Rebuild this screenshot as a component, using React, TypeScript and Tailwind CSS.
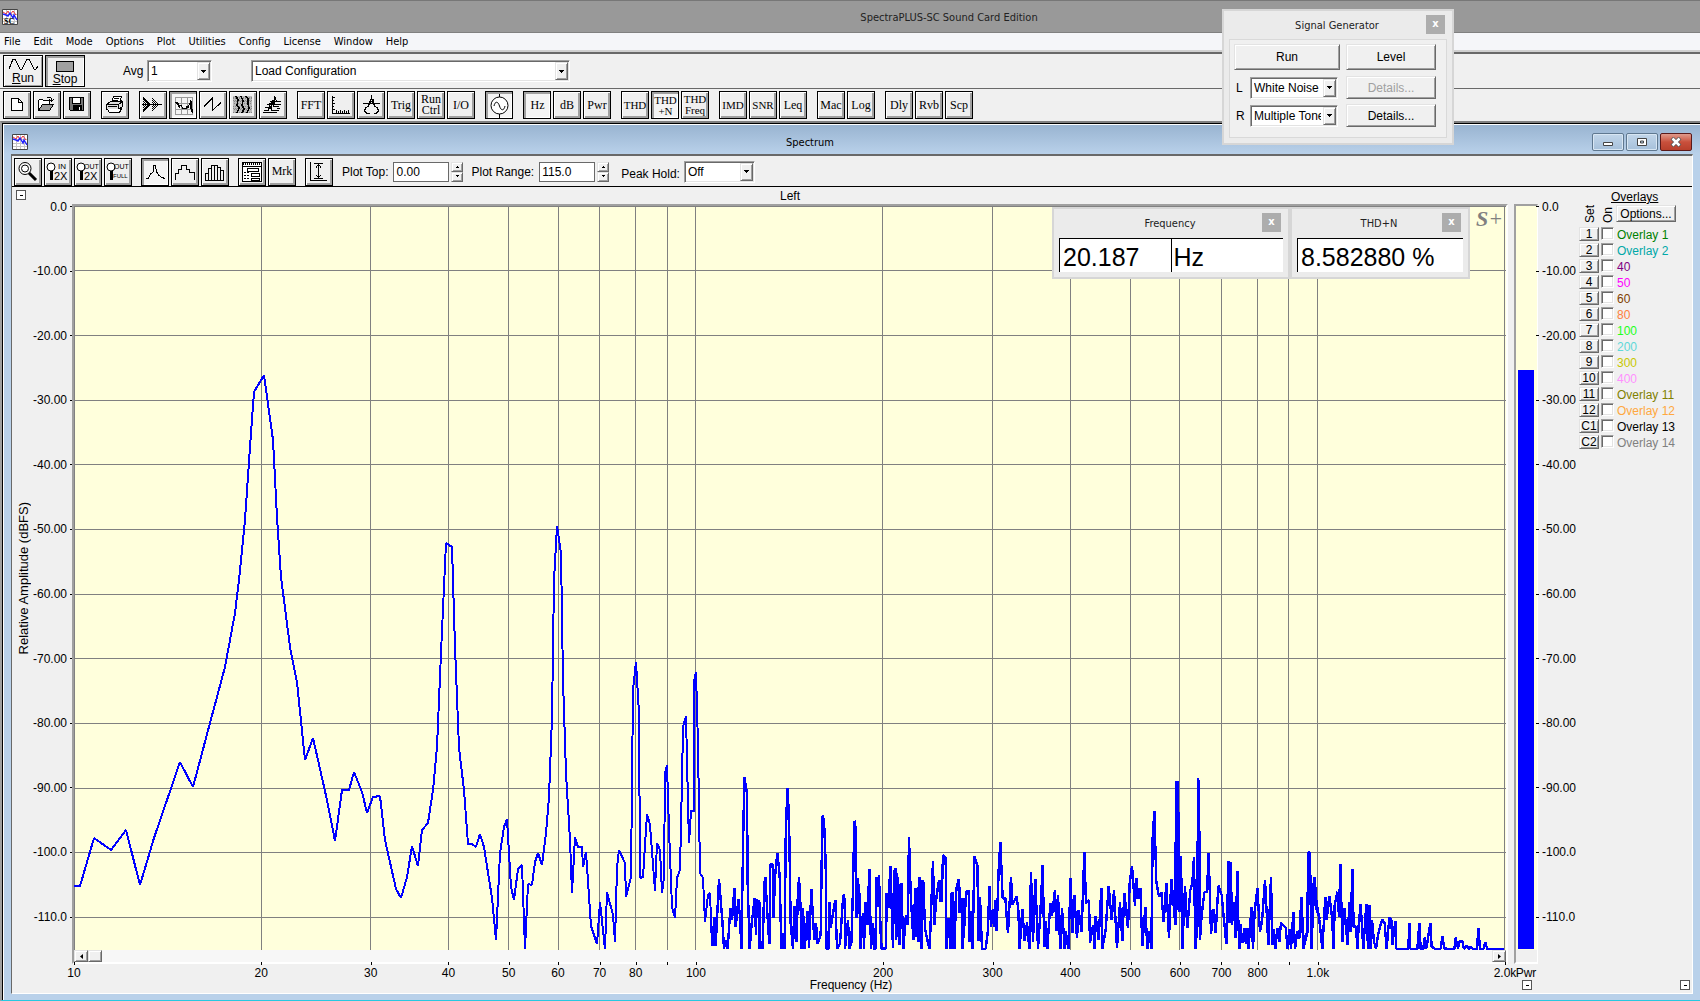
import React from "react";

const SANS = "font-['Liberation_Sans',sans-serif]";
const UI = "font-['DejaVu_Sans_Condensed','Liberation_Sans',sans-serif]";

const RAISED =
  "border border-[#e3e3e3] border-r-[#696969] border-b-[#696969] bg-[#f0f0f0] shadow-[inset_1px_1px_0_#fff,inset_-1px_-1px_0_#a0a0a0]";
const SUNKEN =
  "border border-[#a0a0a0] border-r-white border-b-white bg-white shadow-[inset_1px_1px_0_#696969,inset_-1px_-1px_0_#e3e3e3]";

/* ---------- small controls ---------- */

function Combo({
  label,
  value,
  width,
}: {
  label: string;
  value: string;
  width: string;
}) {
  return (
    <div className={`relative h-[22px] ${width} ${SUNKEN}`}>
      <select
        aria-label={label}
        className="h-full w-full appearance-none bg-transparent pt-px pr-4 pl-[3px] text-[12px] leading-[19px] text-black outline-none"
      >
        <option>{value}</option>
      </select>
      <span
        className={`pointer-events-none absolute top-px right-px bottom-px flex w-[13px] items-center justify-center ${RAISED}`}
      >
        <svg width="5" height="3" viewBox="0 0 5 3" shapeRendering="crispEdges">
          <path d="M0 0h5v1H0zM1 1h3v1H1zM2 2h1v1H2z" />
        </svg>
      </span>
    </div>
  );
}

function Spin({ id, label, value }: { id: string; label: string; value: string }) {
  return (
    <div className="flex items-center">
      <label htmlFor={id} className="mr-[5px] text-[12px]">
        {label}
      </label>
      <input
        id={id}
        defaultValue={value}
        className="h-5 w-14 border border-[#696969] bg-white px-0.5 text-[12px] outline-none"
      />
      <span className="ml-0.5 flex w-3 flex-col">
        {["M0 2h3v1H0zM1 1h1v1H1z", "M0 0h3v1H0zM1 1h1v1H1z"].map((d, i) => (
          <button
            key={d}
            aria-label={`${label} ${i ? "down" : "up"}`}
            className={`flex h-[10px] items-center justify-center ${RAISED}`}
          >
            <svg width="3" height="3" viewBox="0 0 3 3" shapeRendering="crispEdges">
              <path d={d} />
            </svg>
          </button>
        ))}
      </span>
    </div>
  );
}

function Collapse({ label }: { label: string }) {
  return (
    <button
      aria-label={label}
      className="flex h-[10px] w-[10px] shrink-0 items-center justify-center border border-[#555] bg-white"
    >
      <span className="h-px w-[3px] bg-black" />
    </button>
  );
}

function Tool({
  label,
  on,
  children,
}: {
  label: string;
  on?: boolean;
  children: React.ReactNode;
}) {
  return (
    <button
      aria-label={label}
      aria-pressed={!!on}
      className={`flex h-7 w-7 shrink-0 items-center justify-center overflow-hidden border border-black font-['Liberation_Serif',serif] text-[12px] leading-[11px] whitespace-nowrap text-black ${
        on
          ? "bg-[#f4f4f4] pt-px pl-px shadow-[inset_2px_2px_0_#a0a0a0,inset_-1px_-1px_0_#fff]"
          : "bg-[#efefef] shadow-[inset_1px_1px_0_#fff,inset_-2px_-2px_0_#a0a0a0]"
      }`}
    >
      {children}
    </button>
  );
}

function Ico({ children }: { children: React.ReactNode }) {
  return (
    <svg
      width="24"
      height="24"
      viewBox="0 0 24 24"
      fill="none"
      stroke="#000"
      className="shrink-0"
      shapeRendering="crispEdges"
    >
      {children}
    </svg>
  );
}

/* ---------- tool icons ---------- */

const icons: Record<string, React.ReactNode> = {
  New: (
    <Ico>
      <path fill="#fff" d="M6.500 5.500h7l4 4v8h-11zM13.500 5.500v4h4" />
    </Ico>
  ),
  Open: (
    <Ico>
      <path fill="#fff" d="M3.500 17.500v-10l1-1h3l1 1h6v3" />
      <path fill="#999" d="M3.500 17.500l4-6h11l-4 6z" />
      <path d="M12 4.500h4M16.500 5v3M14.500 6.500l2 2 2-2" />
    </Ico>
  ),
  Save: (
    <Ico>
      <path fill="#777" d="M4.500 4.500h14v13h-13l-1-1z" />
      <path fill="#fff" d="M7.500 4.500h8v6h-8z" />
      <path fill="#000" d="M8 12.500h8v5H8z" />
      <path stroke="#fff" d="M14.500 14v3" />
    </Ico>
  ),
  Print: (
    <Ico>
      <path fill="#fff" d="M8.500 9.500l2-6h8l-2 6z" />
      <path d="M11 5.500h5M10 7.500h5" />
      <path fill="#ddd" d="M3.500 11.500l4-3h11l-3 3zM3.500 11.500h12v5h-12zM15.500 11.500l4-3v5l-4 3" />
      <path fill="#fff" d="M4.500 16.500l2 3h10l2-4" />
      <path d="M5 13.500h9M17.500 7l2 2" />
    </Ico>
  ),
  "Time series": (
    <Ico>
      <path
        strokeDasharray="1 1"
        d="M2.500 4v16M3.500 5v14M4.500 6v12M5.500 7v10M6.500 8v8M7.500 9v6M8.500 10v4M11.500 5v14M12.500 6v12M13.500 7v10M14.500 8v8M15.500 9v6M16.500 10v4"
      />
      <path d="M1 11.500h20M2 4.500l6 6M2 18.500l6-6" />
    </Ico>
  ),
  Spectrum: (
    <Ico>
      <path stroke="#999" d="M3.500 3.500h17v17h-17zM9.500 3v17M15.500 3v17M3 9.500h17M3 15.500h17" />
      <path d="M3 8.500h2l2 4 2-1 2 3h3l1-2 1 1 3-7 1 9 1 3M4 9.500h2l2 4M18.500 6v6l1 6" />
    </Ico>
  ),
  Phase: (
    <Ico>
      <path d="M3 13.500L11.500 5v12.500L20 9.500" />
    </Ico>
  ),
  Spectrogram: (
    <Ico>
      <path fill="#bbb" stroke="none" d="M2 3h19v17H2z" />
      <path
        stroke="#888"
        strokeDasharray="1 1"
        d="M2 4.500h19M2 7.500h19M3 10.500h18M2 13.500h19M3 16.500h18M2 19.500h19M2 5.500h19M3 8.500h18M2 15.500h19"
      />
      <path strokeWidth="1.500" d="M5 3l2 4-1 5 2 3-2 5M10 3l2 5-1 4 2 4-2 4M15 3l2 3v5l1 4-2 5" />
    </Ico>
  ),
  Surface: (
    <Ico>
      <path d="M2 19.500h14M3 17.500h4l2-4 2 4h6M4 14.500h4l1-4 2-1 2 4h5M6 11.500h4l2-4 1 4h7M10 18v-8M13.500 3v8M9 8.500h11M13.500 3l2 5 4 1M16 15.500h3M15 17.500h3" />
    </Ico>
  ),
  Scaling: (
    <Ico>
      <path d="M3.500 3v17M3 20.500h18M3 4.500h3M3 7.500h2M3 10.500h3M3 13.500h2M3 16.500h3M7.500 17v3M9.500 18v2M11.500 17v3M13.500 18v2M15.500 17v3M17.500 18v2M19.500 17v3" />
    </Ico>
  ),
  Calibrate: (
    <Ico>
      <path d="M12.500 2v4M4 10.500h17M11 6h3v2h-3M11.500 7l-2 6-3 2-1 3 2 2h3M13.500 7l2 6 3 2 1 3-2 2h-3M12 8l-3 5M13 8l3 5" />
    </Ico>
  ),
  Generator: (
    <svg width="24" height="24" viewBox="0 0 24 24" fill="none" stroke="#000" className="shrink-0">
      <circle cx="11.500" cy="11.500" r="8.500" fill="#fff" />
      <path d="M11.500 0v3M11.500 20v4M6 12c1-5 4-5 5.500 0s4.500 5 5.500 0" />
    </svg>
  ),
  Zoom: (
    <svg width="24" height="24" viewBox="0 0 24 24" fill="none" stroke="#000" className="shrink-0">
      <circle cx="9" cy="8.500" r="6" fill="#fff" />
      <circle cx="9" cy="8.500" r="3.500" />
      <path d="M13 13l7 7" strokeWidth="3" />
    </svg>
  ),
  Peak: (
    <Ico>
      <path d="M2 18.500h2l3-5 2-1 1-7h1l2 7 2 3 3 2 3 1" />
    </Ico>
  ),
  Steps: (
    <Ico>
      <path d="M2.500 20v-7h3V9h3V5.500h5v4h3v3h4.500V20" />
    </Ico>
  ),
  Bars: (
    <Ico>
      <path d="M2.500 20v-7h3v7M5.500 20V8.500h3V20M8.500 20V5.500h3V20M11.500 20V5.500h3V20M14.500 20V7.500h3V20M17.500 20v-9.500h3V20M2 20.500h19" />
    </Ico>
  ),
  Dialog: (
    <Ico>
      <path fill="#fff" d="M2.500 2.500h19v19h-19z" />
      <path d="M3 4.500h18M3 3.500h18" strokeDasharray="1 1" />
      <path d="M3 6.500h18M7.500 8.500h11v3h-11zM11.500 13.500h8v3h-8zM11.500 18.500h8v2h-8z" />
      <path d="M4 12.500h5M4 15.500h5M4 18.500h5" strokeDasharray="2 1" />
    </Ico>
  ),
  Range: (
    <Ico>
      <path d="M3.500 2v18M3 20.500h17M7 3.500h9M7 18.500h9M11.500 4v14M9.500 7.500v-1l2-2 2 2v1M9.500 14.500v1l2 2 2-2v-1" />
    </Ico>
  ),
};

function ZoomStep({ a, b }: { a: string; b: string }) {
  return (
    <svg width="24" height="24" viewBox="0 0 24 24" className="shrink-0">
      <circle cx="5" cy="7" r="4" fill="#fff" stroke="#000" />
      <path d="M4 11h3v9H4z" />
      <text x={a === "IN" ? 12 : 8} y="9" fontSize={a === "IN" ? 8 : 7} fontFamily="Liberation Sans">
        {a}
      </text>
      <text
        x={b === "2X" ? 8 : 7}
        y={b === "2X" ? 20 : 18}
        fontSize={b === "2X" ? 11 : 6}
        fontFamily="Liberation Sans"
      >
        {b}
      </text>
    </svg>
  );
}

function AppIcon({ text }: { text?: string }) {
  return (
    <svg width="16" height="16" viewBox="0 0 16 16" className="shrink-0">
      <path fill="#fff" stroke="#444" d="M.5.5h15v15H.5z" />
      <path stroke="#c4c4c4" d="M4.500 1v14M8.500 1v14M12.500 1v14M1 5.500h14M1 9.500h14M1 12.500h14" />
      <path fill="none" stroke="#e33" d="M1 3l3 2 2-3 2 4 3-4 3 4" />
      <path fill="none" stroke="#22f" strokeWidth="1.400" d="M1 5l3 1 2 1 2-3 3 5 1-3 3 5" />
      {text && (
        <text x="2" y="14.500" fontSize="8" fontWeight="bold" fontFamily="Liberation Serif">
          {text}
        </text>
      )}
    </svg>
  );
}

/* ---------- toolbars ---------- */

type Item = { t: string; on?: boolean; small?: boolean };
const mainTools: Item[][] = [
  [{ t: "New" }, { t: "Open" }, { t: "Save" }],
  [{ t: "Print" }],
  [{ t: "Time series" }, { t: "Spectrum", on: true }, { t: "Phase" }, { t: "Spectrogram" }, { t: "Surface" }],
  [{ t: "FFT" }, { t: "Scaling" }, { t: "Calibrate" }, { t: "Trig" }, { t: "Run Ctrl" }, { t: "I/O" }],
  [{ t: "Generator", on: true }],
  [{ t: "Hz", on: true }, { t: "dB" }, { t: "Pwr" }],
  [{ t: "THD", small: true }, { t: "THD +N", on: true, small: true }, { t: "THD Freq", small: true }],
  [{ t: "IMD", small: true }, { t: "SNR", small: true }, { t: "Leq" }],
  [{ t: "Mac" }, { t: "Log" }],
  [{ t: "Dly" }, { t: "Rvb" }, { t: "Scp" }],
];

function ToolGroup({ items }: { items: Item[] }) {
  return (
    <div className="flex gap-0.5">
      {items.map(({ t, on, small }) => (
        <Tool key={t} label={t} on={on}>
          {icons[t] ?? (
            <span className={small ? "text-[11px]" : ""}>
              {t.split(" ").map((w) => (
                <span key={w} className="block">
                  {w}
                </span>
              ))}
            </span>
          )}
        </Tool>
      ))}
    </div>
  );
}

/* ---------- chart ---------- */

const MINOR = [10, 20, 30, 40, 50, 60, 70, 80, 90, 100, 200, 300, 400, 500, 600, 700, 800, 900, 1000, 2000];
const DB = ["0.0", "-10.00", "-20.00", "-30.00", "-40.00", "-50.00", "-60.00", "-70.00", "-80.00", "-90.00", "-100.0", "-110.0"];
const freqX = (f: number) => Math.floor(74.4 + 621.5 * Math.log10(f / 10)) + 0.5;
const dbY = (i: number) => Math.floor(206.3 + 64.65 * i) + 0.5;
const freqLabel = (f: number) =>
  f === 90 || f === 900 ? "" : f >= 1000 ? `${(f / 1000).toFixed(1)}k` : `${f}`;

const LOW =
  "74,886 80,886 94,838 111,850 126,830 140,885 154,838 167,800 180,762 193,787 210,723 225,667 235,613 239,580 245,520 250,447 254,392 264,375 273,440 277,517 281,577 290,647 297,682 305,760 313,738 327,800 335,841 342,790 349,790 354,772 362,792 367,813 373,797 380,796 385,840 396,889 401,898 407,877 412,846 418,866 422,830 428,823 433,790 437,747 441,653 446,543 452,547 455,647 459,748 464,790 468,844 472,844 476,847 480,834 484,847 492,898 496,940 500,853 504,827 507,819 511,887 514,900 518,869 522,865 525,949 528,884 532,885 535,862 538,853 542,865 546,833 549,797 552,717 554,580 557,526 561,553 563,680 566,773 568,807 570,840 572,893 575,837 578,847 582,847 583,867 586,852 591,926 597,944 600,902 605,949 607,892 613,915 615,942 617,868 619,850 625,863 626,897 631,877 632,783 633,690 636,662 639,713 640,878 643,877 647,814 650,825 655,891 657,843 660,850 662,893 664,877 665,773 667,765 669,830 672,907 675,918 677,878 680,870 682,780 683,727 686,716 688,803 689,843 691,811 694,811 694,682 696,672 698,745 700,873 703,878 705,922 708,895 710,893 712,946";

/* Upper bands are sampled at a third of a plot unit. */
const MID =
  "457,918 463,830 467,917 477,718 487,840 492,927 496,900 503,927 511,805 516,840 523,745 527,862 535,778 540,830 544,927 550,570 553,412 561,460 563,730 569,927 575,850 584,775 588,885 590,780 598,785 599,927 603,905 608,927 613,730 616,712 622,820 628,912 631,672 638,672 640,835 646,700 652,638 659,705 664,927 669,880 674,927 677,600 682,443 687,525 692,850 699,927 703,797 710,905 713,780 717,712 722,805 724,927 729,805 734,927 743,812 747,925 754,748 763,900 768,848 773,912 782,885 787,527 792,540 797,670 799,927 805,927 808,785 812,865 819,820 826,780 831,927 840,910 850,764 854,780 855,927 864,840 868,927 874,910 879,745 883,542 888,570 889,835 893,715 898,760 901,927 909,818 912,927 916,785 922,855 928,688 933,927 939,850 942,927 946,927 950,710 953,800 957,704 962,880 965,927 978,925 980,760 985,805 991,677 999,925 1002,700 1006,685 1008,900 1010,700 1012,890 1014,710 1019,915 1021,735 1024,730 1030,927 1038,825 1043,855 1047,592 1052,760 1060,900 1066,745 1070,890 1074,740 1076,905 1079,712 1084,927 1087,720 1090,725 1095,865 1105,913 1109,927 1113,820 1119,662 1123,855 1130,765 1137,720 1141,785 1150,645 1158,655 1159,927 1166,835 1171,885 1175,758 1179,927 1185,860 1188,752 1196,718 1199,818";

const HIGH =
  "0,365 5,425 9,285 17,295 19,567 27,475 32,567 38,397 44,567 48,395 57,358 61,457 67,415 67,567 74,487 78,395 86,392 88,545 94,452 98,567 103,288 112,316 116,543 120,410 126,567 137,567 144,510 148,377 153,500 159,448 162,500 166,420 170,512 176,330 181,245 188,415 196,415 204,520 213,350 217,435 230,410 235,450 239,567 247,447 254,543 261,487 268,567 273,335 279,545 286,357 294,567 301,460 308,315 313,562 318,483 322,567 331,430 336,467 345,390 349,512 354,405 361,567 366,443 374,567 377,512 385,567 392,354 397,520 403,405 411,535 416,450 425,515 433,275 438,430 447,420 450,550 459,495 464,567 467,467 476,540 484,383 487,567 497,510 506,378 515,480 522,390 531,565 540,427 547,542 553,398 564,505 569,370 576,318 585,437 589,354 595,417 601,385 607,558 616,440 622,567 628,512 634,567 638,235 643,152 649,365 657,410 664,397 671,487 679,370 687,535 694,356 706,495 708,62 711,450 714,62 718,455 723,288 727,567 735,378 742,505 751,390 757,370 762,290 766,567 772,500 774,54 777,500 777,60 780,540 783,490 788,440 793,398 801,395 806,280 813,522 820,447 827,520 835,377 845,405 852,480 859,552 866,302 869,490 872,305 876,495 881,425 887,535 892,333 895,480 898,567 901,492 907,550 913,505 918,553 922,505 925,567 930,510 934,442 939,567 944,455 952,385 960,515 966,485 975,360 985,555 993,350 997,555 1002,508 1006,567 1012,505 1018,545 1023,488 1037,503 1043,567 1049,508 1053,567 1060,455 1065,567 1072,515 1078,535 1084,410 1090,567 1102,520 1105,370 1110,275 1114,567 1124,350 1130,450 1140,478";

const TAIL =
  "5,410 10,567 14,527 20,527 26,277 30,277 34,567 38,405 43,350 50,432 57,470 67,567 76,410 80,480 88,407 96,470 101,567 104,435 112,395 117,470 121,312 127,545 133,445 143,555 148,425 152,515 157,327 161,500 167,500 173,567 176,495 182,432 190,567 199,432 204,567 208,436 212,567 216,480 222,545 228,567 235,520 240,500 247,478 254,490 260,567 268,472 274,480 277,555 286,482 289,567 325,567 328,488 331,567 352,567 358,490 362,567 370,567 373,533 380,565 386,520 391,490 395,560 406,567 422,567 427,530 433,565 446,567 463,567 467,533 474,565 478,545 487,543 492,567 500,557 506,567 512,559 518,567 531,567 535,505 540,567 550,567 556,548 562,567 613,567";

function Plot() {
  return (
    <svg
      viewBox="74 206 1432 744"
      preserveAspectRatio="none"
      className="block min-h-0 w-full flex-1 bg-[#ffffdc]"
      role="img"
      aria-label="Spectrum, left channel"
      shapeRendering="crispEdges"
    >
      <g stroke="#808080">
        {MINOR.map((f) => (
          <path key={f} vectorEffect="non-scaling-stroke" d={`M${freqX(f)} 206V950`} />
        ))}
        {DB.map((d, i) => (
          <path key={d} vectorEffect="non-scaling-stroke" d={`M74 ${dbY(i)}H1506`} />
        ))}
      </g>
      <g fill="none" stroke="#00f" strokeWidth="2" strokeLinejoin="bevel">
        <polyline points={LOW} vectorEffect="non-scaling-stroke" />
        <polyline
          points={MID}
          strokeWidth="2.400"
          transform="translate(560 640) scale(.33333)"
          vectorEffect="non-scaling-stroke"
        />
        <polyline
          points={HIGH}
          strokeWidth="2.400"
          transform="translate(940 760) scale(.33333)"
          vectorEffect="non-scaling-stroke"
        />
        <polyline
          points={TAIL}
          strokeWidth="2.400"
          transform="translate(1300 760) scale(.33333)"
          vectorEffect="non-scaling-stroke"
        />
      </g>
    </svg>
  );
}

function DbScale({ right }: { right?: boolean }) {
  return (
    <div className="flex flex-1 flex-col">
      <div className="flex grow-[110] basis-0 flex-col justify-between">
        {DB.map((d) => (
          <div
            key={d}
            className={`flex h-px items-center gap-[3px] ${right ? "flex-row-reverse justify-end" : "justify-end"}`}
          >
            <span>{d}</span>
            <span className={`h-px bg-black ${right ? "w-[3px]" : "w-0.5"}`} />
          </div>
        ))}
      </div>
      <div className="grow-[5] basis-0" />
    </div>
  );
}

/* ---------- overlays ---------- */

const overlays = [
  ["1", "Overlay 1", "text-[#008000]"],
  ["2", "Overlay 2", "text-[#00a8a8]"],
  ["3", "40", "text-[#800080]"],
  ["4", "50", "text-[#ff00ff]"],
  ["5", "60", "text-[#804000]"],
  ["6", "80", "text-[#ff8040]"],
  ["7", "100", "text-[#20ff20]"],
  ["8", "200", "text-[#60d8d8]"],
  ["9", "300", "text-[#c8c800]"],
  ["10", "400", "text-[#ff90ff]"],
  ["11", "Overlay 11", "text-[#808000]"],
  ["12", "Overlay 12", "text-[#ffa840]"],
  ["C1", "Overlay 13", "text-black"],
  ["C2", "Overlay 14", "text-[#808080]"],
];

function Overlays() {
  return (
    <aside className="w-[113px] shrink-0">
      <div className="flex h-10 items-end">
        <span className="mb-1 ml-1 w-[18px] rotate-180 leading-[14px] [writing-mode:vertical-rl]">
          Set
        </span>
        <span className="mb-1 w-[15px] rotate-180 leading-[14px] [writing-mode:vertical-rl]">On</span>
        <div className="flex w-[60px] flex-col pb-[5px]">
          <span className="-ml-[5px] leading-4 underline">Overlays</span>
          <button className={`h-[17px] w-[60px] leading-[14px] ${RAISED}`}>Options...</button>
        </div>
      </div>
      {overlays.map(([n, name, color]) => (
        <div key={n} className="flex h-4 items-start">
          <button className={`h-[14px] w-5 leading-[11px] ${RAISED}`}>{n}</button>
          <input
            id={`ov-${n}`}
            type="checkbox"
            className={`ml-0.5 h-[13px] w-[13px] appearance-none ${SUNKEN}`}
          />
          <label htmlFor={`ov-${n}`} className={`ml-[3px] leading-4 ${color}`}>
            {name}
          </label>
        </div>
      ))}
    </aside>
  );
}

/* ---------- floating panels ---------- */

function Panel({ title, children, width }: { title: string; children: React.ReactNode; width: string }) {
  return (
    <section className={`border-2 border-[#d6d6d6] bg-[#ebebeb] px-[5px] ${width}`}>
      <header className={`relative flex h-7 items-center justify-center pt-0.5 pr-0.5 text-[11px] text-[#222] ${UI}`}>
        {title}
        <button
          aria-label={`Close ${title}`}
          className="absolute top-1 right-0.5 flex h-[19px] w-[19px] items-center justify-center bg-[#adadad] pb-0.5 text-[11px] font-bold text-white"
        >
          x
        </button>
      </header>
      {children}
    </section>
  );
}

function SignalGenerator() {
  const rows = [
    { ch: "L", value: "White Noise", disabled: true },
    { ch: "R", value: "Multiple Tone", disabled: false },
  ];
  return (
    <Panel title="Signal Generator" width="w-[232px]">
      <div className="mb-[5px] h-[99px] border border-[#d9d9d9] bg-[#f0f0f0] p-1">
        <div className="mb-1.5 flex gap-1.5">
          <button className={`h-[26px] w-[106px] ${RAISED}`}>Run</button>
          <button className={`h-[26px] w-[90px] ${RAISED}`}>Level</button>
        </div>
        {rows.map((r) => (
          <div key={r.ch} className="mb-[5px] flex h-[23px] items-center">
            <span className="w-4 pl-0.5">{r.ch}</span>
            <Combo label={`${r.ch} channel signal`} value={r.value} width="w-[88px]" />
            <button
              disabled={r.disabled}
              className={`ml-2 h-[23px] w-[90px] ${r.disabled ? "text-[#a0a0a0]" : ""} ${RAISED}`}
            >
              Details...
            </button>
          </div>
        ))}
      </div>
    </Panel>
  );
}

/* ---------- page ---------- */

export default function App() {
  return (
    <div className={`relative flex min-h-screen flex-col bg-[#f0f0f0] text-[12px] leading-[14px] text-black ${SANS}`}>
      <header className={`flex h-[33px] items-center border-t border-b border-t-[#777] border-b-[#808080] bg-[#999] pl-0.5 text-[11px] text-[#222] ${UI}`}>
        <AppIcon text="SC" />
        <h1 className="flex-1 pt-0.5 pl-[180px] text-center">SpectraPLUS-SC Sound Card Edition</h1>
      </header>

      <nav className={`flex h-[17px] items-center gap-[13px] bg-[#f5f6f9] pl-1 text-[11px] ${UI}`}>
        {["File", "Edit", "Mode", "Options", "Plot", "Utilities", "Config", "License", "Window", "Help"].map((m) => (
          <button key={m}>{m}</button>
        ))}
      </nav>
      <div className="h-1 border-b-2 border-[#696969] bg-[#d0d0d0]" />

      <div className="flex h-[35px] items-center border-b border-[#696969] pl-[3px]">
        <button className="h-8 w-10 border border-black px-1 shadow-[inset_1px_1px_0_#fff,inset_-1px_-1px_0_#a0a0a0]">
          <svg width="30" height="14" viewBox="0 0 30 14" fill="none" stroke="#000" shapeRendering="crispEdges">
            <path d="M1 12l4-10h2l5 10h2l5-10h2l5 10h2l2-3" />
          </svg>
          <span className="block leading-[14px]">
            <u>R</u>un
          </span>
        </button>
        <button className="ml-0.5 flex h-8 w-10 flex-col items-center border border-black pt-[5px] shadow-[inset_2px_2px_0_#a0a0a0,inset_-1px_-1px_0_#fff]">
          <span className="h-[11px] w-[18px] shrink-0 border border-black bg-[#a0a0a0]" />
          <span className="leading-[15px]">
            <u>S</u>top
          </span>
        </button>
        <span className="ml-[38px] w-6">Avg</span>
        <Combo label="Avg" value="1" width="w-[65px]" />
        <span className="w-[39px]" />
        <Combo label="Configuration" value="Load Configuration" width="w-[319px]" />
      </div>

      <div className="flex h-8 items-center gap-2.5 pl-[3px]">
        {mainTools.map((g, i) => (
          <ToolGroup key={i} items={g} />
        ))}
      </div>

      <main className="flex flex-1 flex-col border-t-2 border-b border-l-2 border-t-[#808080] border-b-[#28c8e0] border-l-[#a0a0a0]">
        <section className="flex flex-1 flex-col border-t border-l border-black">
          <div className="flex flex-1 flex-col border-t border-l border-white bg-[#b9d1ea] px-[7px] pb-[6px]">
            <header className="-mx-[7px] flex h-[29px] items-center bg-linear-to-b from-[#99b4d1] to-[#b9d1ea] pt-1 pr-2 pl-2">
              <AppIcon />
              <h2 className={`flex-1 pt-0.5 text-center text-[11px] ${UI}`}>Spectrum</h2>
              <div className="flex gap-0.5">
                {["Minimize", "Restore"].map((b) => (
                  <button
                    key={b}
                    aria-label={b}
                    className="flex h-[18px] w-8 items-center justify-center rounded-[2px] border border-[#5f7890] bg-linear-to-b from-[#c2d6ea] to-[#a6c0da] shadow-[inset_0_0_0_1px_#d8e6f3]"
                  >
                    <svg width="12" height="10" viewBox="0 0 12 10" fill="#fff" stroke="#444">
                      {b === "Minimize" ? (
                        <path d="M1.500 5.500h9v3h-9z" />
                      ) : (
                        <path fillRule="evenodd" d="M1.500 1.500h9v7h-9zM4.500 4h3v2h-3z" />
                      )}
                    </svg>
                  </button>
                ))}
                <button
                  aria-label="Close"
                  className="flex h-[18px] w-8 items-center justify-center rounded-[2px] border border-[#5a1a1a] bg-linear-to-b from-[#e09a8c] via-[#c9503c] via-50% to-[#b8402c]"
                >
                  <svg width="12" height="10" viewBox="0 0 12 10">
                    <path d="M2 1l8 8M10 1L2 9" stroke="#555" strokeWidth="4" />
                    <path d="M2.500 1.500l7 7M9.500 1.500l-7 7" stroke="#fff" strokeWidth="2.500" />
                  </svg>
                </button>
              </div>
            </header>

            <div className="flex flex-1 flex-col border border-t-2 border-[#696969] border-r-white border-b-white bg-[#f0f0f0]">
              <div className="flex h-[31px] items-center border-b border-black pt-px pl-0.5">
                <div className="flex gap-0.5">
                  <Tool label="Zoom">{icons.Zoom}</Tool>
                  <Tool label="Zoom in 2X"><ZoomStep a="IN" b="2X" /></Tool>
                  <Tool label="Zoom out 2X"><ZoomStep a="OUT" b="2X" /></Tool>
                  <Tool label="Zoom out full"><ZoomStep a="OUT" b="FULL" /></Tool>
                </div>
                <div className="ml-[9px] flex gap-0.5">
                  <Tool label="Line" on>{icons.Peak}</Tool>
                  <Tool label="Steps">{icons.Steps}</Tool>
                  <Tool label="Bars">{icons.Bars}</Tool>
                </div>
                <div className="ml-[9px] flex gap-0.5">
                  <Tool label="Plot options">{icons.Dialog}</Tool>
                  <Tool label="Markers">Mrk</Tool>
                </div>
                <div className="mr-[9px] ml-[9px]">
                  <Tool label="Auto range">{icons.Range}</Tool>
                </div>
                <Spin id="top" label="Plot Top:" value="0.00" />
                <span className="w-2" />
                <Spin id="range" label="Plot Range:" value="115.0" />
                <span className="mr-1 ml-3 pt-1">Peak Hold:</span>
                <Combo label="Peak Hold" value="Off" width="w-[71px]" />
              </div>

              <div className="flex flex-1">
                <div className="flex w-[60px] shrink-0 flex-col pb-[30px]">
                  <div className="h-[19px] pt-[3px] pl-1">
                    <Collapse label="Collapse plot" />
                  </div>
                  <div className="flex flex-1">
                    <span className="ml-[5px] w-[14px] shrink-0 rotate-180 self-center text-center text-[13px] whitespace-nowrap [writing-mode:vertical-rl]">
                      Relative Amplitude (dBFS)
                    </span>
                    <DbScale />
                  </div>
                </div>

                <div className="flex min-w-0 flex-1 flex-col">
                  <div className="h-[17px] pt-0.5 text-center">Left</div>
                  <div className="flex min-h-[300px] flex-1 flex-col border-2 border-[#a0a0a0] border-r-white border-b-white">
                    <div className="relative flex flex-1 flex-col">
                      <Plot />
                      <span className="absolute top-px right-[3px] font-['Liberation_Serif',serif] text-[22px] leading-6 font-bold text-[#808080] italic">
                        S<span className="font-normal">+</span>
                      </span>
                    </div>
                    <div className="flex h-3 justify-between bg-[#f7f7f7]">
                      <div className="flex">
                        <button aria-label="Scroll left" className={`flex w-[14px] items-center justify-center ${RAISED}`}>
                          <svg width="3" height="5" viewBox="0 0 3 5"><path d="M3 0v5L0 2.500z" /></svg>
                        </button>
                        <button aria-label="Scroll thumb" className={`w-[14px] ${RAISED}`} />
                      </div>
                      <button aria-label="Scroll right" className={`flex w-[14px] items-center justify-center ${RAISED}`}>
                        <svg width="3" height="5" viewBox="0 0 3 5"><path d="M0 0v5l3-2.500z" /></svg>
                      </button>
                    </div>
                  </div>
                  <div className="-mt-0.5 flex h-[18px] pr-[3px] pl-0.5">
                    {MINOR.map((f, i) => (
                      <div
                        key={f}
                        className="w-0 basis-0"
                        style={{ flexGrow: i < MINOR.length - 1 ? Math.log10(MINOR[i + 1] / f) : 0 }}
                      >
                        <span className="block h-[3px] w-px bg-black" />
                        <span className="mt-[1px] inline-block -translate-x-1/2">{freqLabel(f)}</span>
                      </div>
                    ))}
                  </div>
                </div>

                <div className="ml-1.5 flex w-6 shrink-0 flex-col pt-[17px]">
                  <div className="flex flex-1 flex-col border-t-2 border-r border-b-2 border-l-2 border-[#a0a0a0] border-r-white border-b-white">
                    <div className="flex flex-1 flex-col bg-[#ffffdc] pr-[3px] pb-px pl-0.5">
                      <div className="grow-[164] basis-0" />
                      <div className="grow-[579] basis-0 bg-[#00f]" />
                    </div>
                    <div className="h-3 bg-[#f0f0f0]" />
                  </div>
                  <span className="h-4 pt-0.5 text-center">Pwr</span>
                </div>

                <div className="-ml-0.5 flex w-[43px] shrink-0 flex-col pt-[19px] pb-[30px]">
                  <DbScale right />
                </div>
                <Overlays />
              </div>

              <footer className="grid h-[13px] grid-cols-[1fr_auto_1fr] items-start pr-0.5">
                <span />
                <span className="leading-[11px]">Frequency (Hz)</span>
                <span className="flex justify-end gap-[148px]">
                  <Collapse label="Collapse meter" />
                  <Collapse label="Collapse overlays" />
                </span>
              </footer>
            </div>
          </div>
        </section>
      </main>

      <div className="absolute top-[9px] right-[246px]">
        <SignalGenerator />
      </div>
      <div className="absolute top-[207px] right-[230px] flex text-[25px] leading-8">
        <Panel title="Frequency" width="w-[238px]">
          <div className="mt-px mb-[5px] flex h-[34px] border-t border-l border-black bg-white">
            <output className="w-1/2 border-r border-black pt-0.5 pl-[3px]">20.187</output>
            <output className="w-1/2 pt-0.5 pl-0.5">Hz</output>
          </div>
        </Panel>
        <Panel title="THD+N" width="w-[180px]">
          <div className="mt-px mb-[5px] h-[34px] border-t border-l border-black bg-white pt-0.5 pl-[3px]">
            <output>8.582880 %</output>
          </div>
        </Panel>
      </div>
    </div>
  );
}
